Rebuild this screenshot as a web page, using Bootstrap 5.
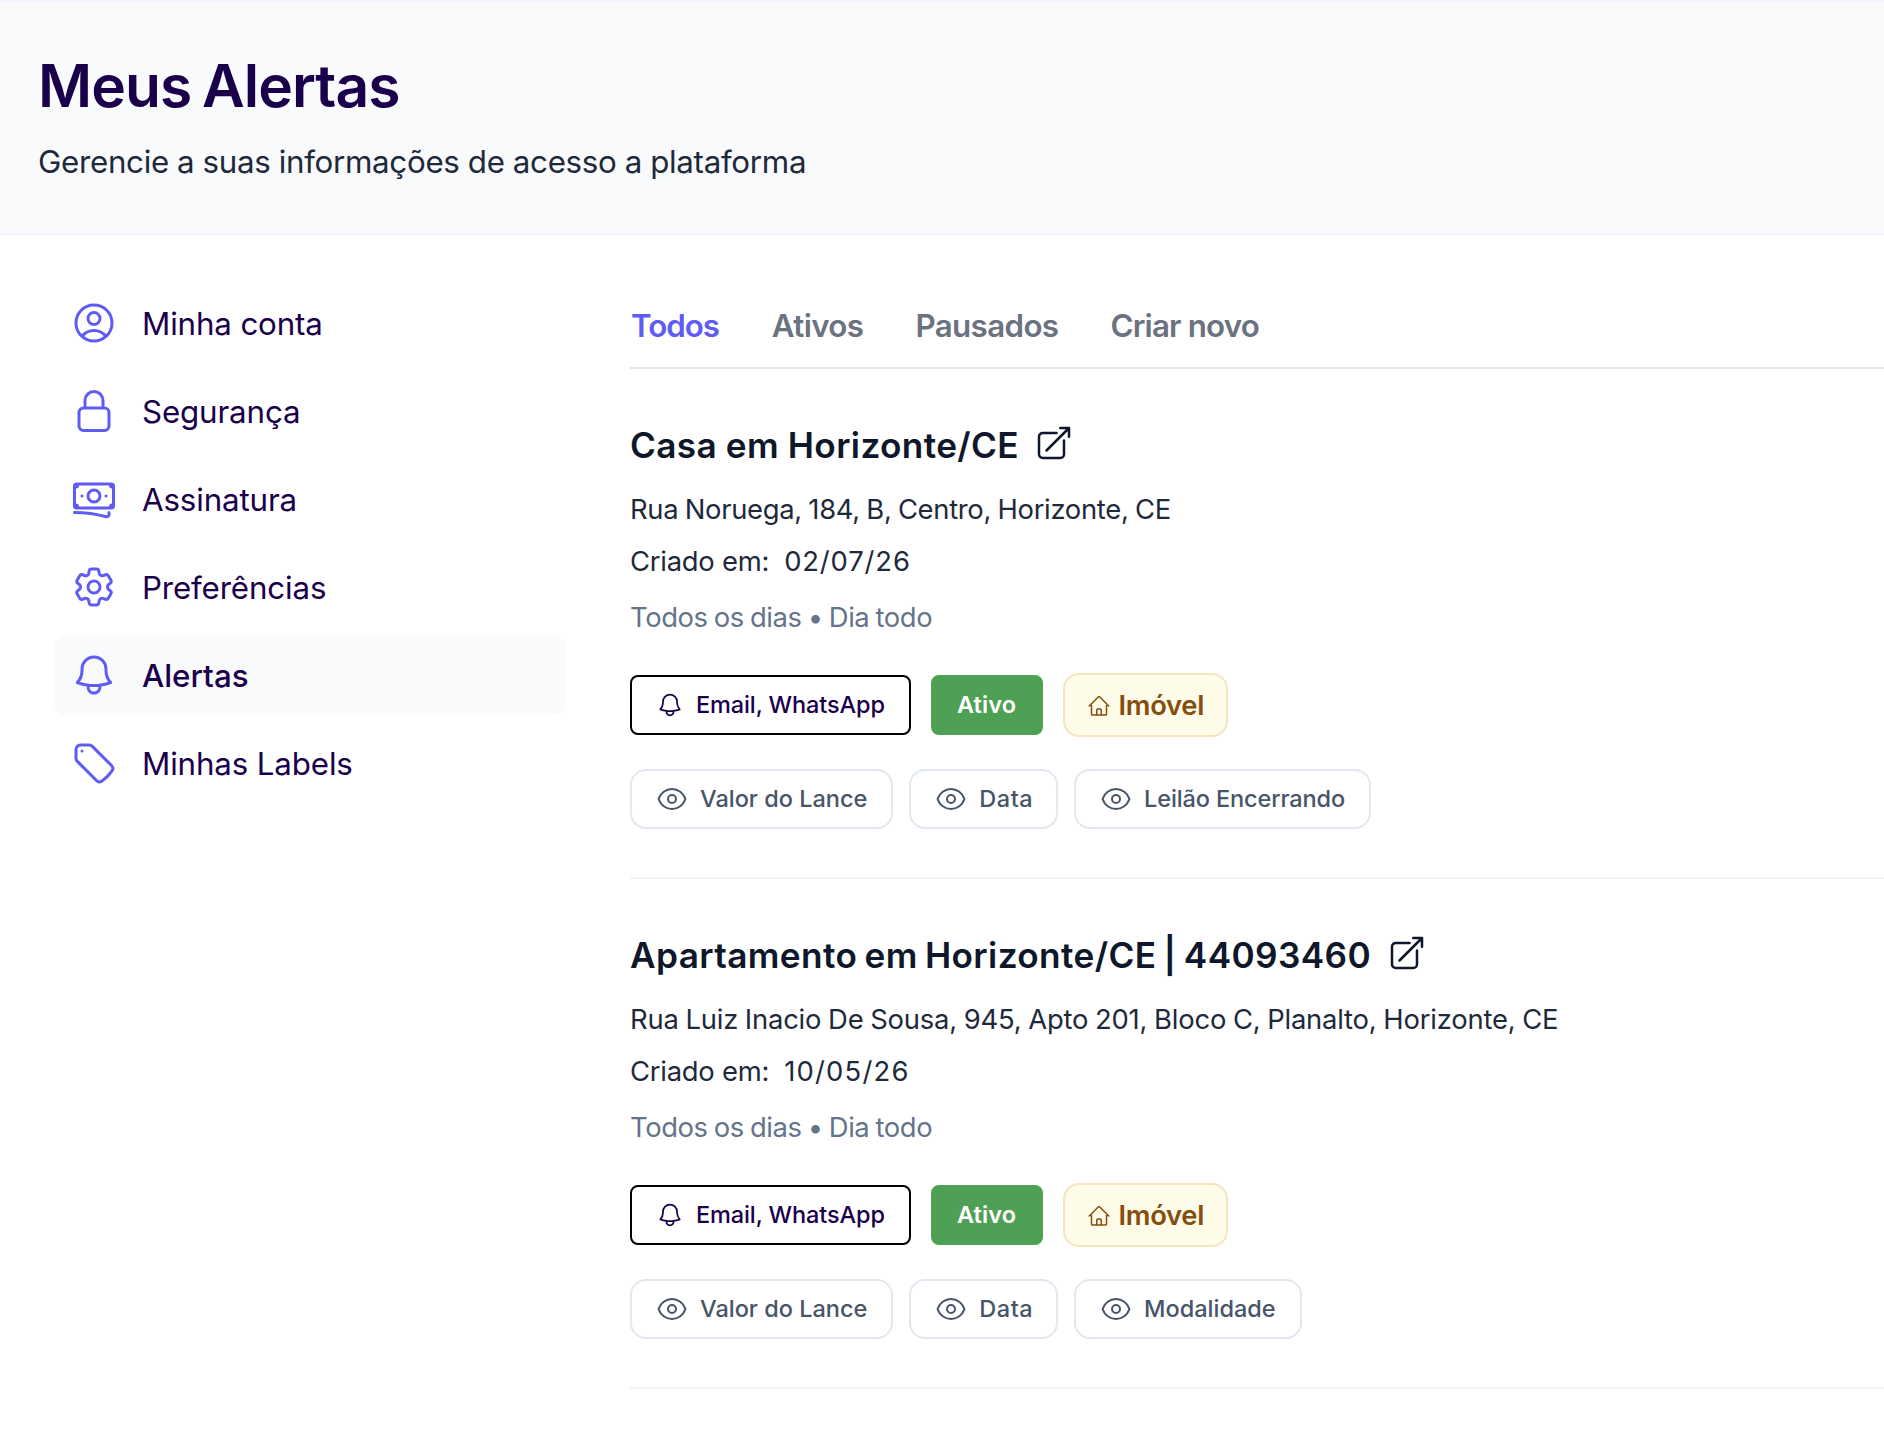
<!DOCTYPE html>
<html lang="pt-BR">
<head>
    <meta charset="UTF-8">
    <meta name="viewport" content="width=device-width, initial-scale=1">
    <title>Meus Alertas</title>
    <link href="https://cdn.jsdelivr.net/npm/bootstrap@5.3.3/dist/css/bootstrap.min.css" rel="stylesheet">
    <style>
    body {
      font-family: Inter, "Liberation Sans", sans-serif;
      color: #1e293b;
      background: #fff;
      overflow-x: hidden;
    }
    svg {
      flex-shrink: 0;
      fill: none;
      stroke: currentColor;
      stroke-width: 1.5;
      stroke-linecap: round;
      stroke-linejoin: round;
    }

    /* topo */
    .topo {
      height: 235px;
      padding: 49px 38px 0;
      background: #f9fafc;
      border-top: 2px solid #f3f3fd;
      border-bottom: 2px solid #f3f3fd;
    }
    .topo h1 {
      font-size: 58.7px;
      line-height: 70px;
      font-weight: 600;
      letter-spacing: -.95px;
      word-spacing: -3px;
      color: #1a004b;
    }
    .topo p {
      font-size: 31.3px;
      line-height: 48px;
      letter-spacing: -.3px;
      word-spacing: -.3px;
      margin-top: 17px;
    }

    /* menu lateral */
    .lateral { width: 512px; margin-left: 54px; gap: 8px; }
    .lateral .nav-link {
      height: 80px;
      padding: 0 16px;
      gap: 24px;
      border-radius: 12px;
      font-size: 31.3px;
      letter-spacing: -.14px;
      color: #1a004b;
    }
    .lateral .nav-link span { padding-top: 2px; }
    .lateral .nav-link svg { width: 48px; height: 48px; color: #5f5cf5; }
    .lateral .nav-link.active { background: #f9fafc; font-weight: 500; letter-spacing: 0; }

    /* abas */
    .conteudo { margin-left: 64px; min-width: 0; }
    .abas { height: 86px; gap: 52px; padding: 2px 0 0 1px; border-bottom: 2px solid #e5e7eb; }
    .abas .nav-link {
      padding: 0;
      font-size: 31.3px;
      font-weight: 600;
      letter-spacing: -.62px;
      color: #6b7280;
    }
    .abas .nav-link.active { color: #5f5cf5; letter-spacing: -1.05px; margin-right: 1px; }
    .abas .nav-link:last-child { letter-spacing: -.82px; }

    /* alertas */
    .alerta { height: 510px; padding-top: 48px; border-bottom: 2px solid #f1f5f9; }
    .alerta h2 {
      font-size: 35.2px;
      line-height: 56px;
      font-weight: 600;
      letter-spacing: .36px;
      word-spacing: -.5px;
      color: #0f172a;
    }
    .alerta h2.longo { letter-spacing: .38px; word-spacing: -2px; }
    .titulo { gap: 15px; color: #0f172a; }
    .titulo svg { width: 40px; height: 40px; margin-top: -4px; }
    .alerta p { font-size: 27.4px; line-height: 40px; }
    .endereco { margin-top: 16px; letter-spacing: -.3px; word-spacing: -1px; }
    .longo + svg { margin-left: 1px; }
    .endereco.longo { letter-spacing: -.2px; word-spacing: -.7px; }
    .criado { margin-top: 12px; letter-spacing: -.24px; }
    .criado span { letter-spacing: .88px; margin-left: 15px; }
    .criado span.dez { letter-spacing: 1.23px; }
    .horario { margin-top: 16px; letter-spacing: -.4px; word-spacing: -1.2px; color: #64748b; }

    .acoes { margin-top: 36px; gap: 20px; }
    .acoes .btn, .filtros .btn {
      display: flex;
      align-items: center;
      height: 60px;
      padding: 0 24px;
      gap: 12px;
      border-width: 2px;
      font-size: 23.5px;
      font-weight: 500;
    }
    .acoes .btn-canal {
      width: 281px;
      border-color: #000;
      border-radius: 8px;
      color: #1a004b;
      letter-spacing: -.12px;
    }
    .btn-canal svg { width: 28px; height: 28px; }
    .acoes .btn-ativo {
      width: 112px;
      padding: 0 24px;
      border-color: #4ea154;
      border-radius: 8px;
      background: #4ea154;
      color: #fff;
      font-weight: 600;
      letter-spacing: .1px;
    }
    .acoes .btn-imovel {
      width: 165px;
      height: 64px;
      padding: 1px 21.5px 0;
      gap: 8px;
      border-color: #f4e5bd;
      border-radius: 16px;
      background: #fefce8;
      color: #854d0e;
      font-size: 27.4px;
      font-weight: 600;
      letter-spacing: -.3px;
    }
    .btn-imovel svg { width: 24px; height: 24px; }

    .filtros { margin-top: 32px; gap: 16px; }
    .filtros .btn {
      border-color: #e2e8f0;
      border-radius: 16px;
      color: #475569;
      letter-spacing: 0;
    }
    .filtros .btn svg { width: 32px; height: 32px; }
    .filtros .btn.curto { letter-spacing: .5px; padding-right: 23px; }
    .filtros .btn.extenso { letter-spacing: -.12px; }
    </style>
</head>
<body>

  <svg class="d-none">
    <symbol id="i-conta" viewBox="0 0 24 24"><path d="M17.982 18.725A7.488 7.488 0 0 0 12 15.75a7.488 7.488 0 0 0-5.982 2.975m11.963 0a9 9 0 1 0-11.963 0m11.963 0A8.966 8.966 0 0 1 12 21a8.966 8.966 0 0 1-5.982-2.275M15 9.75a3 3 0 1 1-6 0 3 3 0 0 1 6 0Z"/></symbol>
    <symbol id="i-cadeado" viewBox="0 0 24 24"><path d="M16.5 10.5V6.75a4.5 4.5 0 1 0-9 0v3.75m-.75 11.25h10.5a2.25 2.25 0 0 0 2.25-2.25v-6.75a2.25 2.25 0 0 0-2.25-2.25H6.75a2.25 2.25 0 0 0-2.25 2.25v6.75a2.25 2.25 0 0 0 2.25 2.25Z"/></symbol>
    <symbol id="i-notas" viewBox="0 0 24 24"><path d="M2.25 18.75a60.07 60.07 0 0 1 15.797 2.101c.727.198 1.453-.342 1.453-1.096V18.75M3.75 4.5v.75A.75.75 0 0 1 3 6h-.75m0 0v-.375c0-.621.504-1.125 1.125-1.125H20.25M2.25 6v9m18-10.5v.75c0 .414.336.75.75.75h.75m-1.5-1.5h.375c.621 0 1.125.504 1.125 1.125v9.75c0 .621-.504 1.125-1.125 1.125h-.375m1.5-1.5H21a.75.75 0 0 0-.75.75v.75m0 0H3.75m0 0h-.375a1.125 1.125 0 0 1-1.125-1.125V15m1.5 1.5v-.75A.75.75 0 0 0 3 15h-.75M15 10.5a3 3 0 1 1-6 0 3 3 0 0 1 6 0Zm3 0h.008v.008H18V10.5Zm-12 0h.008v.008H6V10.5Z"/></symbol>
    <symbol id="i-engrenagem" viewBox="0 0 24 24"><path d="M9.594 3.94c.09-.542.56-.94 1.11-.94h2.593c.55 0 1.02.398 1.11.94l.213 1.281c.063.374.313.686.645.87.074.04.147.083.22.127.325.196.72.257 1.075.124l1.217-.456a1.125 1.125 0 0 1 1.37.49l1.296 2.247a1.125 1.125 0 0 1-.26 1.431l-1.003.827c-.293.241-.438.613-.43.992a7.723 7.723 0 0 1 0 .255c-.008.378.137.75.43.991l1.004.827c.424.35.534.955.26 1.43l-1.298 2.247a1.125 1.125 0 0 1-1.369.491l-1.217-.456c-.355-.133-.75-.072-1.076.124a6.47 6.47 0 0 1-.22.128c-.331.183-.581.495-.644.869l-.213 1.281c-.09.543-.56.94-1.11.94h-2.594c-.55 0-1.019-.398-1.11-.94l-.213-1.281c-.062-.374-.312-.686-.644-.87a6.52 6.52 0 0 1-.22-.127c-.325-.196-.72-.257-1.076-.124l-1.217.456a1.125 1.125 0 0 1-1.369-.49l-1.297-2.247a1.125 1.125 0 0 1 .26-1.431l1.004-.827c.292-.24.437-.613.43-.991a6.932 6.932 0 0 1 0-.255c.007-.38-.138-.751-.43-.992l-1.004-.827a1.125 1.125 0 0 1-.26-1.43l1.297-2.247a1.125 1.125 0 0 1 1.37-.491l1.216.456c.356.133.751.072 1.076-.124.072-.044.146-.086.22-.128.332-.183.582-.495.644-.869l.214-1.28Z"/><path d="M15 12a3 3 0 1 1-6 0 3 3 0 0 1 6 0Z"/></symbol>
    <symbol id="i-sino" viewBox="0 0 24 24"><path d="M14.857 17.082a23.848 23.848 0 0 0 5.454-1.31A8.967 8.967 0 0 1 18 9.75V9A6 6 0 0 0 6 9v.75a8.967 8.967 0 0 1-2.312 6.022c1.733.64 3.56 1.085 5.455 1.31m5.714 0a24.255 24.255 0 0 1-5.714 0m5.714 0a3 3 0 1 1-5.714 0"/></symbol>
    <symbol id="i-etiqueta" viewBox="0 0 24 24"><path d="M9.568 3H5.25A2.25 2.25 0 0 0 3 5.25v4.318c0 .597.237 1.17.659 1.591l9.581 9.581c.699.699 1.78.872 2.607.33a18.095 18.095 0 0 0 5.223-5.223c.542-.827.369-1.908-.33-2.607L11.16 3.66A2.25 2.25 0 0 0 9.568 3Z"/><path d="M6 6h.008v.008H6V6Z"/></symbol>
    <symbol id="i-abrir" viewBox="0 0 24 24"><path d="M13.5 6H5.25A2.25 2.25 0 0 0 3 8.25v10.5A2.25 2.25 0 0 0 5.25 21h10.5A2.25 2.25 0 0 0 18 18.75V10.5m-10.5 6L21 3m0 0h-5.25M21 3v5.25"/></symbol>
    <symbol id="i-casa" viewBox="0 0 24 24"><path d="m2.25 12 8.954-8.955c.44-.439 1.152-.439 1.591 0L21.75 12M4.5 9.75v10.125c0 .621.504 1.125 1.125 1.125H9.75v-4.875c0-.621.504-1.125 1.125-1.125h2.25c.621 0 1.125.504 1.125 1.125V21h4.125c.621 0 1.125-.504 1.125-1.125V9.75M8.25 21h8.25"/></symbol>
    <symbol id="i-olho" viewBox="0 0 24 24"><path d="M2.036 12.322a1.012 1.012 0 0 1 0-.639C3.423 7.51 7.36 4.5 12 4.5c4.638 0 8.573 3.007 9.963 7.178.07.207.07.431 0 .639C20.577 16.49 16.64 19.5 12 19.5c-4.638 0-8.573-3.007-9.963-7.178Z"/><path d="M15 12a3 3 0 1 1-6 0 3 3 0 0 1 6 0Z"/></symbol>
  </svg>

  <header class="topo">
    <h1 class="mb-0">Meus Alertas</h1>
    <p class="mb-0">Gerencie a suas informações de acesso a plataforma</p>
  </header>

  <div class="d-flex pt-5">
    <nav class="lateral nav flex-column flex-shrink-0">
      <a class="nav-link d-flex align-items-center" href="#"><svg><use href="#i-conta"/></svg><span>Minha conta</span></a>
      <a class="nav-link d-flex align-items-center" href="#"><svg><use href="#i-cadeado"/></svg><span>Segurança</span></a>
      <a class="nav-link d-flex align-items-center" href="#"><svg><use href="#i-notas"/></svg><span>Assinatura</span></a>
      <a class="nav-link d-flex align-items-center" href="#"><svg><use href="#i-engrenagem"/></svg><span>Preferências</span></a>
      <a class="nav-link d-flex align-items-center active" href="#"><svg><use href="#i-sino"/></svg><span>Alertas</span></a>
      <a class="nav-link d-flex align-items-center" href="#"><svg><use href="#i-etiqueta"/></svg><span>Minhas Labels</span></a>
    </nav>

    <main class="conteudo flex-grow-1">
      <nav class="abas nav align-items-center">
        <a class="nav-link active" href="#">Todos</a>
        <a class="nav-link" href="#">Ativos</a>
        <a class="nav-link" href="#">Pausados</a>
        <a class="nav-link" href="#">Criar novo</a>
      </nav>

      <section class="alerta">
        <div class="titulo d-flex align-items-center">
          <h2 class="mb-0">Casa em Horizonte/CE</h2>
          <svg><use href="#i-abrir"/></svg>
        </div>
        <p class="endereco mb-0">Rua Noruega, 184, B, Centro, Horizonte, CE</p>
        <p class="criado mb-0 d-flex">Criado em: <span>02/07/26</span></p>
        <p class="horario mb-0">Todos os dias • Dia todo</p>
        <div class="acoes d-flex align-items-center">
          <button type="button" class="btn btn-canal"><svg><use href="#i-sino"/></svg>Email, WhatsApp</button>
          <button type="button" class="btn btn-ativo">Ativo</button>
          <button type="button" class="btn btn-imovel"><svg><use href="#i-casa"/></svg>Imóvel</button>
        </div>
        <div class="filtros d-flex">
          <button type="button" class="btn"><svg><use href="#i-olho"/></svg>Valor do Lance</button>
          <button type="button" class="btn curto"><svg><use href="#i-olho"/></svg>Data</button>
          <button type="button" class="btn extenso"><svg><use href="#i-olho"/></svg>Leilão Encerrando</button>
        </div>
      </section>

      <section class="alerta">
        <div class="titulo d-flex align-items-center">
          <h2 class="longo mb-0">Apartamento em Horizonte/CE | 44093460</h2>
          <svg><use href="#i-abrir"/></svg>
        </div>
        <p class="endereco longo mb-0">Rua Luiz Inacio De Sousa, 945, Apto 201, Bloco C, Planalto, Horizonte, CE</p>
        <p class="criado mb-0 d-flex">Criado em: <span class="dez">10/05/26</span></p>
        <p class="horario mb-0">Todos os dias • Dia todo</p>
        <div class="acoes d-flex align-items-center">
          <button type="button" class="btn btn-canal"><svg><use href="#i-sino"/></svg>Email, WhatsApp</button>
          <button type="button" class="btn btn-ativo">Ativo</button>
          <button type="button" class="btn btn-imovel"><svg><use href="#i-casa"/></svg>Imóvel</button>
        </div>
        <div class="filtros d-flex">
          <button type="button" class="btn"><svg><use href="#i-olho"/></svg>Valor do Lance</button>
          <button type="button" class="btn curto"><svg><use href="#i-olho"/></svg>Data</button>
          <button type="button" class="btn"><svg><use href="#i-olho"/></svg>Modalidade</button>
        </div>
      </section>
    </main>
  </div>

  <script src="https://cdn.jsdelivr.net/npm/bootstrap@5.3.3/dist/js/bootstrap.bundle.min.js"></script>
</body>
</html>
